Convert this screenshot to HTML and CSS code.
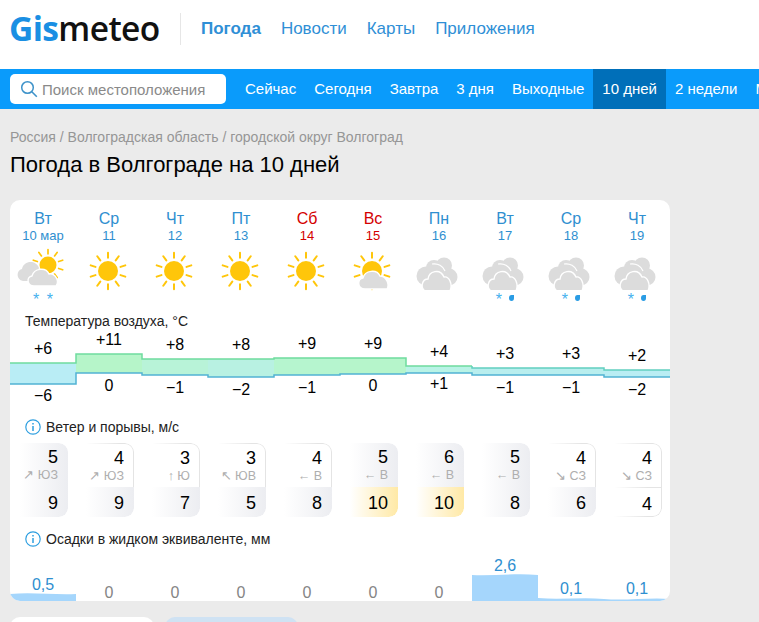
FILE: index.html
```html
<!DOCTYPE html>
<html lang="ru">
<head>
  <meta charset="UTF-8">
  <title>Погода в Волгограде на 10 дней</title>
  <link rel="stylesheet" href="styles.css">
</head>
<body>

  <!-- icon parts, reused in the days row -->
  <svg class="defs" width="0" height="0">
    <symbol id="rays" viewBox="0 0 44 44">
      <path fill="none" stroke="#ffc60a" stroke-width="2.2" stroke-linecap="round" d="M22 2V7.5M33.8 5.8L30.5 10.3M10.2 5.8L13.5 10.3M41 15.8L35.8 17.5M3 15.8L8.2 17.5M41 28.2L35.8 26.5M3 28.2L8.2 26.5M33.8 38.2L30.5 33.7M10.2 38.2L13.5 33.7M22 42V36.5"/>
    </symbol>
    <symbol id="sun" viewBox="0 0 44 44">
      <use href="#rays" width="44" height="44"/>
      <circle cx="22" cy="22" r="11" fill="#ffc60a"/>
    </symbol>
    <symbol id="clouds" viewBox="0 0 42 33">
      <g fill="#dcdcdc">
        <circle cx="10" cy="19" r="9.5"/>
        <circle cx="18" cy="11" r="8"/>
        <circle cx="28" cy="8.5" r="8"/>
        <circle cx="33" cy="20" r="8.5"/>
      </g>
      <path fill="none" stroke="#fff" stroke-width="1.2" d="M16 7C22 6 27 9 29 14"/>
      <path fill="#dcdcdc" stroke="#fff" stroke-width="1.4" d="M9 34C4 31 6 22 12 22C13 14 24 11 28 20C33 19 37 27 34 34Z"/>
    </symbol>
    <symbol id="sun-clouds" viewBox="0 0 50 40">
      <use href="#rays" x="16" y="0" width="34" height="34"/>
      <circle cx="33" cy="17" r="8.5" fill="#ffc60a"/>
      <path fill="#dcdcdc" d="M8 33C1 32 1 22 7 21C9 12 21 12 24 20L14 33Z"/>
      <path fill="#dcdcdc" stroke="#fff" stroke-width="1.4" d="M19 38C12 38 11 29 17 28C19 20 31 19 34 26C40 25 45 33 41 38Z"/>
    </symbol>
    <symbol id="sun-behind" viewBox="0 0 40 40">
      <use href="#sun" width="40" height="40"/>
      <path fill="#dcdcdc" stroke="#fff" stroke-width="1.4" d="M13 38C5 38 5 28 11 27C13 19 25 18 28 25C34 25 38 33 35 38Z"/>
    </symbol>
    <symbol id="info" viewBox="0 0 16 16">
      <circle cx="8" cy="8" r="7.2" fill="none" stroke="#2e9fe0" stroke-width="1.2"/>
      <path d="M8 4v1.6M8 7v5" stroke="#2e9fe0" stroke-width="1.5"/>
    </symbol>
  </svg>

  <header class="top">
    <div class="logo"><span class="logo-blue">Gis</span>meteo</div>
    <nav class="top-links">
      <a class="current">Погода</a>
      <a>Новости</a>
      <a>Карты</a>
      <a>Приложения</a>
    </nav>
  </header>

  <div class="bar">
    <div class="search">
      <svg width="18" height="18" viewBox="0 0 18 18"><circle cx="7.5" cy="7.5" r="5.8" fill="none" stroke="#3d92c9" stroke-width="1.5"/><path d="M11.8 11.8l5 5" stroke="#3d92c9" stroke-width="1.6"/></svg>
      <span>Поиск местоположения</span>
    </div>
    <nav class="tabs">
      <a>Сейчас</a>
      <a>Сегодня</a>
      <a>Завтра</a>
      <a>3 дня</a>
      <a>Выходные</a>
      <a class="active">10 дней</a>
      <a>2 недели</a>
      <a>Месяц</a>
    </nav>
  </div>

  <main class="page">
    <div class="crumbs">Россия / Волгоградская область / городской округ Волгоград</div>
    <h1>Погода в Волгограде на 10 дней</h1>

    <section class="card">
      <div class="days">
        <div class="day"><b>Вт</b><span>10 мар</span></div>
        <div class="day"><b>Ср</b><span>11</span></div>
        <div class="day"><b>Чт</b><span>12</span></div>
        <div class="day"><b>Пт</b><span>13</span></div>
        <div class="day weekend"><b>Сб</b><span>14</span></div>
        <div class="day weekend"><b>Вс</b><span>15</span></div>
        <div class="day"><b>Пн</b><span>16</span></div>
        <div class="day"><b>Вт</b><span>17</span></div>
        <div class="day"><b>Ср</b><span>18</span></div>
        <div class="day"><b>Чт</b><span>19</span></div>
      </div>

      <div class="icons">
        <div class="icon">
          <svg class="pic-mix" width="50" height="40"><use href="#sun-clouds"/></svg>
          <div class="fall">* *</div>
        </div>
        <div class="icon"><svg class="pic" width="40" height="40"><use href="#sun"/></svg></div>
        <div class="icon"><svg class="pic" width="40" height="40"><use href="#sun"/></svg></div>
        <div class="icon"><svg class="pic" width="40" height="40"><use href="#sun"/></svg></div>
        <div class="icon"><svg class="pic" width="40" height="40"><use href="#sun"/></svg></div>
        <div class="icon"><svg class="pic" width="40" height="40"><use href="#sun-behind"/></svg></div>
        <div class="icon"><svg class="pic-cloud" width="42" height="33"><use href="#clouds"/></svg></div>
        <div class="icon">
          <svg class="pic-cloud" width="42" height="33"><use href="#clouds"/></svg>
          <div class="fall">* <i class="drop"></i></div>
        </div>
        <div class="icon">
          <svg class="pic-cloud" width="42" height="33"><use href="#clouds"/></svg>
          <div class="fall">* <i class="drop"></i></div>
        </div>
        <div class="icon">
          <svg class="pic-cloud" width="42" height="33"><use href="#clouds"/></svg>
          <div class="fall">* <i class="drop"></i></div>
        </div>
      </div>

      <div class="label temp-label">Температура воздуха, °C</div>

      <svg class="chart temp" width="660" height="86" viewBox="0 0 660 86">
        <g stroke-width="1.5">
          <path fill="#b9edf5" d="M0 34H66V55H0Z"/>
          <path fill="#b6f5c9" d="M66 25H132V44H66Z"/>
          <path fill="#b8f3d8" d="M132 30H198V46H132Z"/>
          <path fill="#b8f1e2" d="M198 30H264V48H198Z"/>
          <path fill="#b6f5cf" d="M264 29H330V46H264Z"/>
          <path fill="#b6f5cb" d="M330 29H396V45H330Z"/>
          <path fill="#b9f3e6" d="M396 37H462V44H396Z"/>
          <path fill="#b9eeee" d="M462 39H594V46H462Z"/>
          <path fill="#b9edf3" d="M594 41H660V48H594Z"/>
          <path fill="none" stroke="#6fdc9f" d="M0 34H66V25H132V30H264V29H396V37H462"/>
          <path fill="none" stroke="#62cfc0" d="M462 37V39H594V41H660"/>
          <path fill="none" stroke="#52b3d3" d="M0 55H66V44H132V46H198V48H264V46H330V45H396V44H462V46H594V48H660"/>
        </g>
        <g class="t" text-anchor="middle">
          <text x="33" y="25">+6</text><text x="33" y="72">−6</text>
          <text x="99" y="16">+11</text><text x="99" y="62">0</text>
          <text x="165" y="21">+8</text><text x="165" y="64">−1</text>
          <text x="231" y="21">+8</text><text x="231" y="66">−2</text>
          <text x="297" y="20">+9</text><text x="297" y="64">−1</text>
          <text x="363" y="20">+9</text><text x="363" y="62">0</text>
          <text x="429" y="28">+4</text><text x="429" y="60">+1</text>
          <text x="495" y="30">+3</text><text x="495" y="64">−1</text>
          <text x="561" y="30">+3</text><text x="561" y="64">−1</text>
          <text x="627" y="32">+2</text><text x="627" y="66">−2</text>
        </g>
      </svg>

      <div class="label wind-label"><svg width="16" height="16"><use href="#info"/></svg>Ветер и порывы, м/с</div>

      <div class="winds">
        <div class="wind"><div class="speed gray"><b>5</b><span>↗ ЮЗ</span></div><div class="gust gray">9</div></div>
        <div class="wind"><div class="speed line"><b>4</b><span>↗ ЮЗ</span></div><div class="gust gray">9</div></div>
        <div class="wind"><div class="speed line"><b>3</b><span>↑ Ю</span></div><div class="gust gray">7</div></div>
        <div class="wind"><div class="speed line"><b>3</b><span>↖ ЮВ</span></div><div class="gust gray">5</div></div>
        <div class="wind"><div class="speed line"><b>4</b><span>← В</span></div><div class="gust gray">8</div></div>
        <div class="wind"><div class="speed gray"><b>5</b><span>← В</span></div><div class="gust yellow">10</div></div>
        <div class="wind"><div class="speed gray"><b>6</b><span>← В</span></div><div class="gust yellow">10</div></div>
        <div class="wind"><div class="speed gray"><b>5</b><span>← В</span></div><div class="gust gray">8</div></div>
        <div class="wind"><div class="speed line"><b>4</b><span>↘ СЗ</span></div><div class="gust gray">6</div></div>
        <div class="wind"><div class="speed line"><b>4</b><span>↘ СЗ</span></div><div class="gust line">4</div></div>
      </div>

      <div class="label rain-label"><svg width="16" height="16"><use href="#info"/></svg>Осадки в жидком эквиваленте, мм</div>

      <svg class="chart rain" width="660" height="50" viewBox="0 0 660 50">
        <path fill="#a5d6fc" d="M0 41C22 39 44 42 66 41V50H0Z"/>
        <path fill="#a5d6fc" d="M462 22C484 23 506 20 528 22V50H462Z"/>
        <path fill="#a5d6fc" d="M528 45C550 47 572 44 594 46S640 44 660 46V50H528Z"/>
        <g class="r" text-anchor="middle">
          <text class="v" x="33" y="37">0,5</text>
          <text x="99" y="45">0</text>
          <text x="165" y="45">0</text>
          <text x="231" y="45">0</text>
          <text x="297" y="45">0</text>
          <text x="363" y="45">0</text>
          <text x="429" y="45">0</text>
          <text class="v" x="495" y="18">2,6</text>
          <text class="v" x="561" y="41">0,1</text>
          <text class="v" x="627" y="41">0,1</text>
        </g>
      </svg>
    </section>

    <div class="pills">
      <div class="pill"></div>
      <div class="pill pill-blue"></div>
    </div>
  </main>

</body>
</html>
```

FILE: styles.css
```css
html, body {
  margin: 0;
  padding: 0;
  height: 100%;
  background-color: #ebebeb;
  font-family: "Liberation Sans", Arial, sans-serif;
  color: #000;
  overflow: hidden;
}

.defs {
  display: block;
  height: 0;
}

/* Header */
.top {
  height: 69px;
  background-color: #fff;
  display: flex;
  align-items: center;
  padding-left: 9px;
  box-sizing: border-box;
}

.logo {
  width: 171px;
  flex: none;
  font-family: "Open Sans", sans-serif;
  font-weight: 600;
  font-size: 33.5px;
  letter-spacing: -0.6px;
  color: #111;
  margin-top: -14px;
  height: 32px;
  line-height: 32px;
}

.logo-blue {
  color: #1a8fe3;
  font-weight: 700;
}

.top-links {
  display: flex;
  gap: 20px;
  height: 32px;
  margin-top: -11px;
  align-items: center;
  border-left: 1px solid #e6e6e6;
  padding-left: 20px;
  font-size: 17px;
  color: #2f8fd6;
}

.current {
  font-weight: bold;
}

/* Blue bar */
.bar {
  height: 40px;
  background-color: #0a9bfb;
  display: flex;
  align-items: center;
  padding-left: 10px;
  overflow: hidden;
}

.search {
  flex: none;
  width: 216px;
  height: 30px;
  box-sizing: border-box;
  background-color: #fff;
  border-radius: 5px;
  display: flex;
  align-items: center;
  gap: 4px;
  padding-left: 10px;
  font-size: 15px;
  color: #8a8a8a;
}

.tabs {
  display: flex;
  flex: none;
  height: 40px;
  margin-left: 10px;
  font-size: 15px;
  color: #fff;
}

.tabs a {
  padding: 0 9px;
  line-height: 40px;
}

.tabs .active {
  background-color: #006fb9;
}

/* Page */
.page {
  padding: 20px 10px 0;
}

.crumbs {
  font-size: 14px;
  line-height: 16px;
  color: #969696;
}

h1 {
  font-weight: normal;
  font-size: 22px;
  line-height: 24px;
  margin: 8px 0 23px;
}

.card {
  width: 660px;
  height: 401px;
  background-color: #fff;
  border-radius: 10px;
  overflow: hidden;
}

.days,
.icons,
.winds {
  display: grid;
  grid-template-columns: repeat(10, 66px);
}

.days {
  padding-top: 10px;
}

.day {
  text-align: center;
  color: #2f8fd0;
  font-size: 16px;
  line-height: 18px;
}

.day b {
  display: block;
  font-weight: normal;
}

.day span {
  display: block;
  font-size: 13px;
  line-height: 16px;
}

.weekend {
  color: #d40000;
}

.icons {
  height: 62px;
  margin-top: 7px;
}

.icon {
  display: flex;
  flex-direction: column;
  align-items: center;
  position: relative;
}

.pic {
  margin-left: -2px;
}

.pic-mix {
  align-self: flex-start;
  margin: -3px 0 0 5px;
}

.pic-cloud {
  margin: 6px 0 0 -4px;
}

.fall {
  position: absolute;
  top: 41px;
  left: 0;
  right: 0;
  text-align: center;
  font-size: 16px;
  line-height: 16px;
  color: #45b1ee;
  word-spacing: 3px;
}

.drop {
  display: inline-block;
  width: 5px;
  height: 6px;
  background-color: #2a9ce4;
  border-radius: 50% 0 50% 50%;
  vertical-align: 4px;
}

.label {
  font-size: 14px;
  line-height: 16px;
  display: flex;
  align-items: center;
  gap: 5px;
  color: #222;
}

.temp-label {
  padding-left: 15px;
  margin-top: 0;
}

.chart {
  display: block;
}

.t text {
  font-size: 16px;
  fill: #000;
}

.wind-label,
.rain-label {
  padding-left: 15px;
}

.wind-label {
  margin-top: 4px;
}

.winds {
  margin-top: 8px;
}

.wind {
  margin-left: 10px;
  margin-right: 8px;
  height: 74px;
  border-radius: 0 9px 9px 0;
  overflow: hidden;
  text-align: right;
}

.speed,
.gust {
  box-sizing: border-box;
  padding-right: 10px;
}

.speed {
  height: 44px;
  padding-top: 5px;
  border-radius: 0 9px 0 0;
}

.speed b {
  display: block;
  font-weight: normal;
  font-size: 18px;
  line-height: 18px;
}

.speed span {
  display: block;
  font-size: 12.5px;
  line-height: 16px;
  margin-top: 1px;
  color: #aeaeae;
}

.gust {
  height: 30px;
  font-size: 18px;
  line-height: 32px;
  border-radius: 0 0 9px 0;
}

.gray {
  background: linear-gradient(to right, #fff, #ecedf1);
}

.yellow {
  background: linear-gradient(to right, #fff, #ffe9a6);
}

.line {
  position: relative;
  border-right: 1px solid #e4e4e4;
  border-top: 1px solid #e4e4e4;
  padding-right: 9px;
}

/* the frame lines fade out to the left */
.line::before {
  content: "";
  position: absolute;
  left: 0;
  top: -1px;
  width: 34px;
  height: 1px;
  background: linear-gradient(to right, #fff, rgba(255, 255, 255, 0));
}

.gust.line {
  border-bottom: 1px solid #e4e4e4;
}

.gust.line::after {
  content: "";
  position: absolute;
  left: 0;
  bottom: -1px;
  width: 34px;
  height: 1px;
  background: linear-gradient(to right, #fff, rgba(255, 255, 255, 0));
}

.rain-label {
  margin-top: 14px;
}

.rain {
  margin-top: 6px;
}

.r text {
  font-size: 16px;
  fill: #858585;
}

.r .v {
  fill: #2f8fd0;
}

.pills {
  display: flex;
  gap: 11px;
  margin-top: 16px;
}

.pill {
  width: 144px;
  height: 40px;
  background-color: #fff;
  border-radius: 10px;
}

.pill-blue {
  width: 133px;
  background-color: #cfe2f3;
}
```
